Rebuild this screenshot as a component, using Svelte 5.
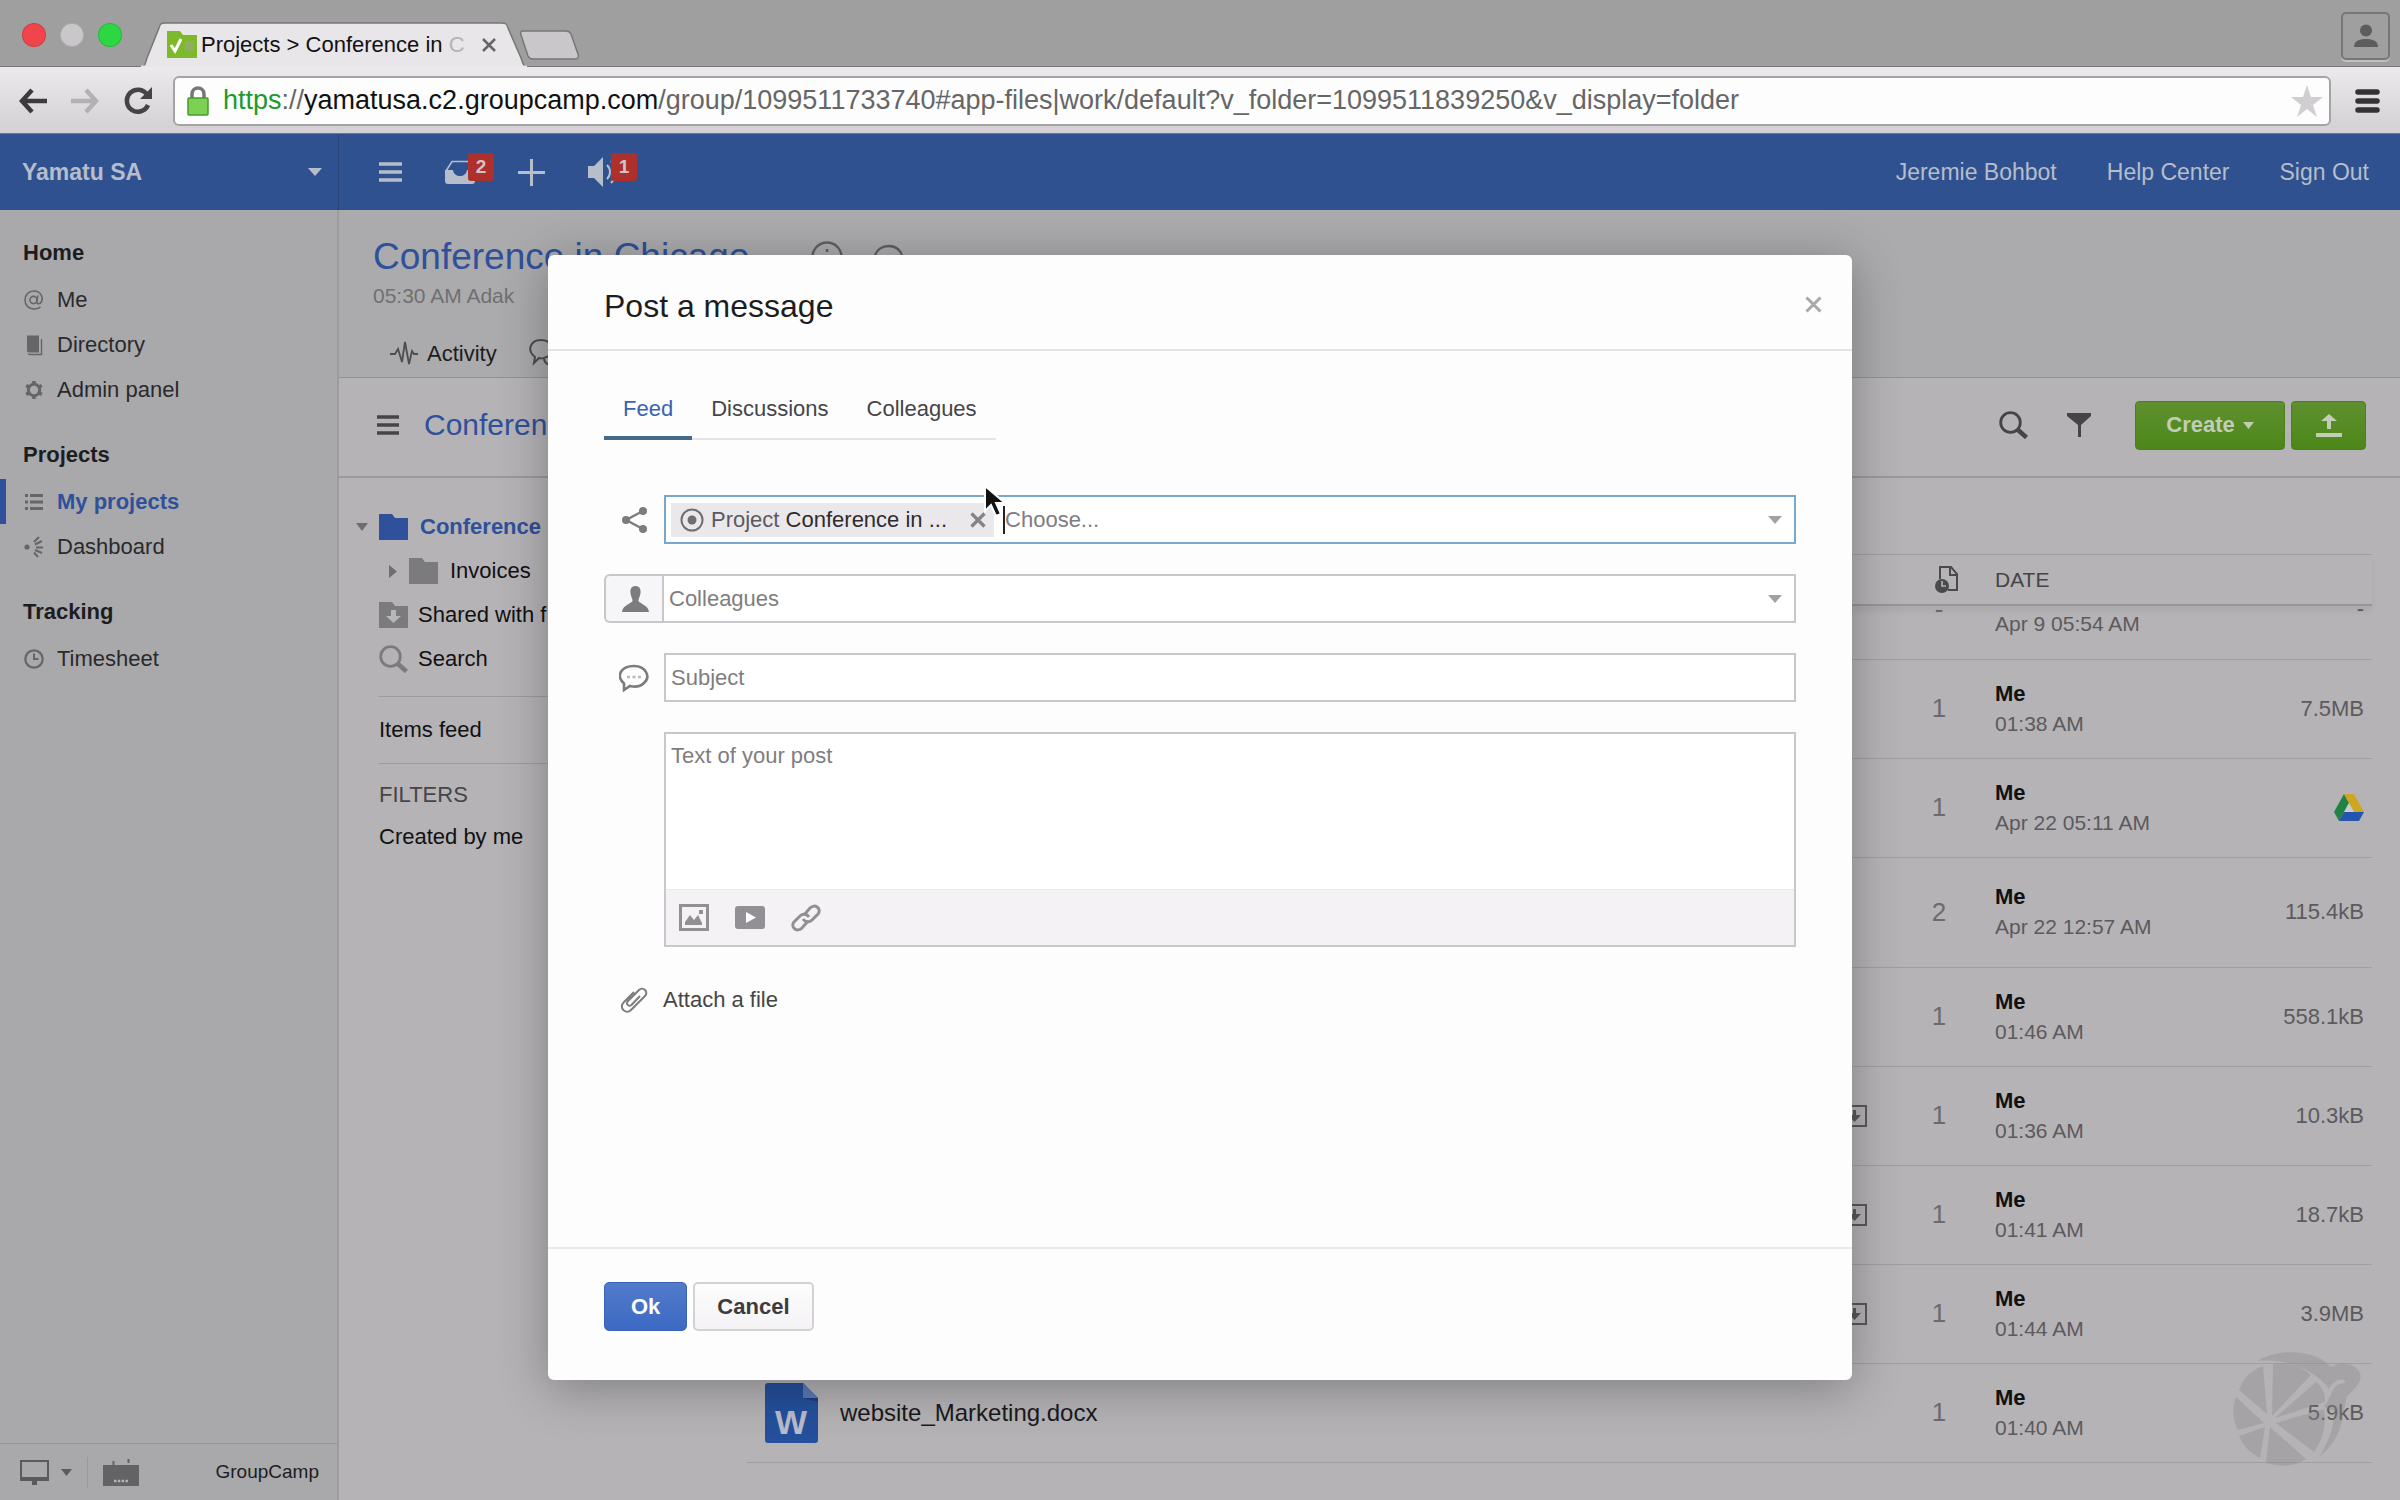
<script>
  const url_path = '/group/1099511733740#app-files|work/default?v_folder=1099511839250&v_display=folder';

  const sections = [
    { title: 'Home', items: [
      { label: 'Me', icon: 'at' },
      { label: 'Directory', icon: 'book' },
      { label: 'Admin panel', icon: 'gear' }
    ] },
    { title: 'Projects', items: [
      { label: 'My projects', icon: 'list', active: true },
      { label: 'Dashboard', icon: 'dashboard' }
    ] },
    { title: 'Tracking', items: [
      { label: 'Timesheet', icon: 'clock' }
    ] }
  ];

  const files = [
    { versions: '-', who: '', date: 'Apr 9 05:54 AM', size: '-' },
    { versions: '1', who: 'Me', date: '01:38 AM', size: '7.5MB' },
    { versions: '1', who: 'Me', date: 'Apr 22 05:11 AM', drive: true },
    { versions: '2', who: 'Me', date: 'Apr 22 12:57 AM', size: '115.4kB', tall: true },
    { versions: '1', who: 'Me', date: '01:46 AM', size: '558.1kB' },
    { versions: '1', who: 'Me', date: '01:36 AM', size: '10.3kB', download: true },
    { versions: '1', who: 'Me', date: '01:41 AM', size: '18.7kB', download: true },
    { versions: '1', who: 'Me', date: '01:44 AM', size: '3.9MB', download: true },
    { name: 'website_Marketing.docx', versions: '1', who: 'Me', date: '01:40 AM', size: '5.9kB' }
  ];

  const tabs = ['Feed', 'Discussions', 'Colleagues'];
  let tab = $state('Feed');
  let open = $state(true);
  let choose = $state('');
  let subject = $state('');
  let text = $state('');
</script>

{#snippet arrow()}
  <svg class="arrow" width="14" height="8" viewBox="0 0 14 8"><path d="M0 0h14L7 8z" fill="currentColor" /></svg>
{/snippet}

{#snippet bars(w)}
  <svg width={w} height="20" viewBox="0 0 24 20" preserveAspectRatio="none"><path d="M0 2h24M0 10h24M0 18h24" stroke="currentColor" stroke-width="3.600" /></svg>
{/snippet}

{#snippet folder()}
  <svg width="29" height="26" viewBox="0 0 29 26"><path d="M0 0h13l3 4h13v22H0z" fill="currentColor" /></svg>
{/snippet}

{#snippet magnifier()}
  <svg width="29" height="28" viewBox="0 0 29 28" fill="none" stroke="currentColor"><circle cx="11.500" cy="11.500" r="9.800" stroke-width="2.800" /><path d="M18.500 18.500l9 8" stroke-width="4.500" /></svg>
{/snippet}

{#snippet nav_icon(name)}
  <svg width="20" height="22" viewBox="0 0 20 22" fill="none" stroke="currentColor">
    {#if name == 'at'}
      <circle cx="9.500" cy="11" r="3.600" stroke-width="1.600" />
      <path d="M13.800 6.500l-1 6.500c0 2.500 3.200 2.200 4.500 0 2.500-5-1-11-7.500-11C4.500 2 1 6 1 11s3.500 9 9 9c2.800 0 5-.8 6.500-2.200" stroke-width="1.600" />
    {:else if name == 'book'}
      <path d="M3 1.500h12v17H5c-1.500 0-2-.8-2-2z" fill="currentColor" stroke="none" />
      <path d="M4 19.500c.5.800 1.200 1 2 1h11.500V5" stroke-width="1.400" />
    {:else if name == 'gear'}
      <circle cx="10" cy="11" r="5.700" stroke-width="3" />
      <path d="M10 2v4M10 16v4M2.200 6.500l3.400 2M14.400 13.500l3.400 2M2.200 15.500l3.400-2M14.400 8.500l3.400-2" stroke-width="3.600" />
    {:else if name == 'list'}
      <path d="M1 4.500h3M1 11h3M1 17.500h3M6 4.500h13M6 11h13M6 17.500h13" stroke-width="3" />
    {:else if name == 'dashboard'}
      <circle cx="3" cy="11" r="2.600" fill="currentColor" stroke="none" />
      <path d="M10 6l5-5M11 8.500L18 5M12 11.500h7M11 14l7 3M10 16.500l4 4.500" stroke-width="2" />
    {:else if name == 'clock'}
      <circle cx="10" cy="11" r="8.700" stroke-width="2.200" />
      <path d="M10 5.500V11h4.500" stroke-width="2" />
    {/if}
  </svg>
{/snippet}

<div class="window">
  <div class="tabstrip">
    <div class="lights"><i class="red"></i><i class="grey"></i><i class="green"></i></div>
    <div class="tab">
      <svg class="tab-shape" viewBox="0 0 388 45" preserveAspectRatio="none">
        <path d="M0 45c6 0 5-4 7-9L19 6c1-4 2-5 6-5h336c5 0 6 1 7 5l13 30c2 5 2 9 7 9z" fill="#e8e6e8" stroke="#777" stroke-width="1.500" />
        <path d="M1 45h386" stroke="#e8e6e8" stroke-width="3" />
      </svg>
      <svg width="30" height="27" viewBox="0 0 30 27"><path d="M0 0h13l3 4h14v23H0z" fill="#7db92b" /><path d="M18 10h9v10h-9z" fill="#8fae62" /><path d="M4 14l4 6 6-12" fill="none" stroke="#fff" stroke-width="3" /></svg>
      <span class="tab-title">Projects &gt; Conference in <em>C</em></span>
      <button class="plain" aria-label="Close tab"><svg width="14" height="14" viewBox="0 0 14 14"><path d="M1 1l12 12M13 1L1 13" stroke="#666" stroke-width="2.500" /></svg></button>
    </div>
    <svg class="newtab" width="60" height="30" viewBox="0 0 60 30"><path d="M3 1h43c3 0 4 1 5 3l7 20c1 3 0 5-3 5H13c-3 0-4-1-5-3L1 5c-1-3 0-4 2-4z" fill="#c9c7c9" stroke="#777" stroke-width="1.500" /></svg>
    <div class="avatar"><svg width="24" height="25" viewBox="0 0 24 25" fill="#5d5d5d"><circle cx="12" cy="6.500" r="6" /><path d="M0 23c0-6 5-8 12-8s12 2 12 8z" /></svg></div>
  </div>

  <div class="toolbar">
    <button class="plain" aria-label="Back"><svg width="28" height="26" viewBox="0 0 28 26" fill="none" stroke="#3c3a3c" stroke-width="4.500"><path d="M13 2L3 13l10 11M3 13h25" /></svg></button>
    <button class="plain" aria-label="Forward"><svg width="28" height="26" viewBox="0 0 28 26" fill="none" stroke="#b3b1b3" stroke-width="4.500"><path d="M15 2l10 11-10 11M25 13H0" /></svg></button>
    <button class="plain" aria-label="Reload"><svg width="30" height="29" viewBox="0 0 30 29"><path d="M24 8.500A11 11 0 1 0 25 19" fill="none" stroke="#454345" stroke-width="4.500" /><path d="M29 1v12H17z" fill="#454345" /></svg></button>
    <div class="address">
      <svg width="22" height="30" viewBox="0 0 22 30"><path d="M5 14V8c0-8 12-8 12 0v6" fill="none" stroke="#777" stroke-width="3.500" /><rect x="1" y="12" width="20" height="17" rx="1" fill="#7cd155" stroke="#489a2a" stroke-width="1.500" /></svg>
      <span class="url"><span class="secure">https</span><span class="dim">://</span>yamatusa.c2.groupcamp.com<span class="dim">{url_path}</span></span>
      <svg width="32" height="32" viewBox="0 0 32 32"><path d="M16 0l4 12h12l-10 8 4 12-10-8-10 8 4-12L0 12h12z" fill="#d0ced0" /></svg>
    </div>
    <button class="plain" aria-label="Menu"><svg width="25" height="26" viewBox="0 0 25 26" stroke="#333" stroke-width="5.500" stroke-linecap="round"><path d="M3 4h19M3 13h19M3 22h19" /></svg></button>
  </div>

  <div class="app">
    <header class="topbar">
      <button class="plain account">Yamatu SA {@render arrow()}</button>
      <div class="tools">
        <button class="plain" aria-label="Toggle menu">{@render bars(23)}</button>
        <button class="plain" aria-label="Inbox">
          <svg width="30" height="24" viewBox="0 0 30 24"><path d="M1 11L7 1.500h16L29 11" fill="none" stroke="currentColor" stroke-width="1.600" /><path d="M0 10h8c1 8 13 8 14 0h8v11c0 2-1 3-3 3H3c-2 0-3-1-3-3z" fill="currentColor" /></svg>
          <b class="badge">2</b>
        </button>
        <button class="plain" aria-label="Add"><svg width="27" height="27" viewBox="0 0 27 27"><path d="M13.500 0v27M0 13.500h27" stroke="currentColor" stroke-width="3" /></svg></button>
        <button class="plain tool-sound" aria-label="Announcements">
          <svg width="30" height="30" viewBox="0 0 30 30"><path d="M0 9h6l9-9v30l-9-9H0z" fill="currentColor" /><path d="M19 8c4 4 4 10 0 14M23 4c6 6 6 16 0 22" fill="none" stroke="currentColor" stroke-width="2" /></svg>
          <b class="badge">1</b>
        </button>
      </div>
      <nav class="user-links">
        <a href="#profile">Jeremie Bohbot</a>
        <a href="#help">Help Center</a>
        <a href="#signout">Sign Out</a>
      </nav>
    </header>

    <div class="body">
      <aside class="sidebar">
        <nav>
          {#each sections as section}
            <section>
              <h2>{section.title}</h2>
              {#each section.items as item}
                <a href="#nav" class:active={item.active}>{@render nav_icon(item.icon)}{item.label}</a>
              {/each}
            </section>
          {/each}
        </nav>
        <footer>
          <svg width="29" height="25" viewBox="0 0 29 25"><path d="M1 1h27v19H1z" fill="none" stroke="#5b5b5d" stroke-width="2" /><path d="M0 17h29v4H0zM12 21h5v4h-5z" fill="#5b5b5d" /></svg>
          <svg width="11" height="7" viewBox="0 0 11 7"><path d="M0 0h11L5.500 7z" fill="#5b5b5d" /></svg>
          <i class="rule"></i>
          <svg width="36" height="27" viewBox="0 0 36 27"><path d="M0 6h36v21H0z" fill="#636365" /><path d="M10.500 2v4M25.500 0v4" stroke="#636365" stroke-width="2" /><path d="M11 22h14" stroke="#b5b5b7" stroke-width="2.500" stroke-dasharray="2.500 1.300" /></svg>
          <span>GroupCamp</span>
        </footer>
      </aside>

      <main>
        <div class="project">
          <h1><span>Conference in Chicago</span>
            <svg width="32" height="32" viewBox="0 0 32 32" fill="none" stroke="#5f5f61" stroke-width="2.400"><circle cx="16" cy="16" r="14.500" /><path d="M16 8v3M16 14v10" /></svg>
            <svg width="32" height="32" viewBox="0 0 32 32" fill="none" stroke="#5f5f61" stroke-width="2.400"><path d="M8 29c-12-9-6-24 8-24s20 19 4 23l-8 1-5 2z" /></svg>
          </h1>
          <p>05:30 AM Adak</p>
          <div class="project-tabs">
            <a href="#activity"><svg width="28" height="26" viewBox="0 0 28 26" fill="none" stroke="#4d4d4f" stroke-width="1.800"><path d="M0 13h5l3-5 4 13L15 1l4 22 3-13 2 3h4" /></svg>Activity</a>
            <a href="#talk" aria-label="Discussions"><svg width="34" height="32" viewBox="0 0 34 32" fill="none" stroke="#4d4d4f" stroke-width="2"><path d="M5 25l1-6C-3 12 2 2 12 2s15 10 9 15-11 3-11 3zM15 21c1 6 8 7 11 5l5 3-1-5c4-5 1-10-4-11" /></svg></a>
          </div>
        </div>

        <div class="folder-bar">
          {@render bars(22)}
          <h2>Conference in Chicago</h2>
          <div class="actions">
            <button class="plain" aria-label="Search">{@render magnifier()}</button>
            <button class="plain" aria-label="Filter"><svg width="24" height="24" viewBox="0 0 24 24"><path d="M0 0h24v3l-10 9v12h-3V12L0 3z" fill="currentColor" /></svg></button>
            <div class="create">
              <button>Create <svg width="11" height="7" viewBox="0 0 11 7"><path d="M0 0h11L5.500 7z" fill="currentColor" /></svg></button>
              <button aria-label="Upload"><svg width="26" height="23" viewBox="0 0 26 23"><path d="M13 0l8 7h-6v8h-4V7H5zM0 19h26v4H0z" fill="currentColor" /></svg></button>
            </div>
          </div>
        </div>

        <div class="content">
          <div class="tree">
            <a href="#folder" class="row current"><span class="toggle"><svg width="12" height="8" viewBox="0 0 12 8"><path d="M0 0h12L6 8z" fill="#6e6e70" /></svg></span>{@render folder()}<span>Conference</span></a>
            <a href="#folder" class="row child"><span class="toggle"><svg width="8" height="13" viewBox="0 0 8 13"><path d="M0 0l8 6.500L0 13z" fill="#6e6e70" /></svg></span>{@render folder()}<span>Invoices</span></a>
            <a href="#folder" class="row tight"><svg width="29" height="26" viewBox="0 0 29 26"><path d="M0 0h13l3 4h13v22H0z" fill="currentColor" /><path d="M12 8h5v6h5l-7.500 7L7 14h5z" fill="#b9b7ba" /></svg><span>Shared with f</span></a>
            <a href="#folder" class="row tight">{@render magnifier()}<span>Search</span></a>
            <a href="#feed" class="feed">Items feed</a>
            <h3>FILTERS</h3>
            <a href="#mine" class="filter">Created by me</a>
          </div>

          <div class="files">
            <div class="files-head">
              <svg width="24" height="27" viewBox="0 0 24 27"><path d="M5 13V1h11l6 7v16h-9M15 1v8h7" fill="none" stroke="#4a4a4c" stroke-width="2" /><circle cx="7" cy="20" r="7" fill="#4a4a4c" /><path d="M7 15v5h4" fill="none" stroke="#b5b3b6" stroke-width="1.600" /></svg>
              <span>DATE</span>
            </div>
            <div class="scroller">
              <table>
                <tbody>
                  {#each files as file}
                    <tr class:tall={file.tall}>
                      <td>
                        {#if file.name}
                          <a class="file" href="#file">
                            <svg width="53" height="60" viewBox="0 0 53 60"><path d="M3 0h35l15 15v42c0 2-1 3-3 3H3c-2 0-3-1-3-3V3c0-2 1-3 3-3z" fill="#24509c" /><path d="M38 15h15v4z" fill="#1c3f7e" /><path d="M38 0l15 15H38z" fill="#5a7bb5" /><text x="26" y="51" text-anchor="middle" font-size="34" font-weight="bold" fill="#b9bccb">W</text></svg>
                            {file.name}
                          </a>
                        {/if}
                      </td>
                      <td class="get">
                        {#if file.download}
                          <svg width="26" height="22" viewBox="0 0 26 22"><path d="M1 1h24v20H1z" fill="none" stroke="#59595b" stroke-width="2" /><path d="M12 5h3v5h5l-6.500 7L7 10h5z" fill="#59595b" /></svg>
                        {/if}
                      </td>
                      <td class="versions">{file.versions}</td>
                      <td class="date"><b>{file.who}</b><span>{file.date}</span></td>
                      <td class="size">
                        {#if file.drive}
                          <svg width="30" height="27" viewBox="0 0 30 27"><path d="M10 0L0 18l5 9L15 9z" fill="#218343" /><path d="M10 0h10l10 18H20z" fill="#cfa621" /><path d="M10 18h20l-5 9H5z" fill="#2754ad" /><path d="M15 9l5 9H10z" fill="#c9cbd2" /></svg>
                        {:else}
                          {file.size}
                        {/if}
                      </td>
                    </tr>
                  {/each}
                </tbody>
              </table>
            </div>
          </div>
        </div>
      </main>
    </div>

    <svg class="mark" width="128" height="114" viewBox="0 0 128 114">
      <g fill="#88888a" fill-opacity=".35">
        <path d="M24 9C48-5 84-2 98 15c8-6 25-4 29 6 3 9-6 17-13 23-5 18-2 40-28 61 9-14 15-28 15-47-3 2-8-2-10-4 6-6 7-15 12-20 4-3 10-2 9-5-4-4-13 1-16 8-14-20-44-31-72-28z" />
        <path d="M40 12c14-2 29 2 38 11L39 64z" />
        <path d="M30 14l4 48L6 38C10 26 18 18 30 14z" />
        <path d="M3 45l28 26-26 7C-1 67-1 56 3 45z" />
        <path d="M6 84l26-9-5 31C17 101 10 94 6 84z" />
        <path d="M37 75l36 32c-12 8-26 8-40 4z" />
        <path d="M43 71l48-14c3 16-2 32-10 43z" />
        <path d="M42 66l41-36c6 5 9 11 9 20z" />
      </g>
    </svg>

    {#if open}
      <div class="overlay">
        <div class="modal" role="dialog" aria-labelledby="modal-title">
          <div class="modal-head">
            <h2 id="modal-title">Post a message</h2>
            <button class="plain" aria-label="Close" onclick={() => open = false}><svg width="17" height="17" viewBox="0 0 17 17"><path d="M1.500 1.500l14 14M15.500 1.500l-14 14" stroke="#a9a7a9" stroke-width="3" /></svg></button>
          </div>

          <div class="modal-body">
            <div class="modal-tabs" role="tablist">
              {#each tabs as t}
                <button role="tab" aria-selected={tab == t} class:selected={tab == t} onclick={() => tab = t}>{t}</button>
              {/each}
            </div>

            <div class="form">
              <label class="lead" for="share"><svg width="25" height="26" viewBox="0 0 25 26"><path d="M21 4L4 13l17 9" fill="none" stroke="#7c7c7e" stroke-width="2.400" /><g fill="#7c7c7e"><circle cx="21" cy="4" r="4" /><circle cx="4" cy="13" r="4" /><circle cx="21" cy="22" r="4" /></g></svg></label>
              <div class="box focused">
                <span class="chip">
                  <svg width="24" height="24" viewBox="0 0 24 24"><circle cx="12" cy="12" r="10.500" fill="none" stroke="#6f6f71" stroke-width="2" /><circle cx="12" cy="12" r="4.500" fill="#6f6f71" /></svg>
                  <span>Project <b>Conference in ...</b></span>
                  <button class="plain" aria-label="Remove"><svg width="16" height="16" viewBox="0 0 16 16"><path d="M1.500 1.500l13 13M14.500 1.500l-13 13" stroke="#858385" stroke-width="3.200" /></svg></button>
                </span>
                <i class="text-caret"></i>
                <input id="share" type="text" placeholder="Choose..." bind:value={choose} />
                {@render arrow()}
                <svg class="pointer" width="24" height="34" viewBox="0 0 24 34"><path d="M2 2v25l6-6 5 11 5-2-5-11h9z" fill="#111" stroke="#fff" stroke-width="2" /></svg>
              </div>

              <button class="lead pick" aria-label="Pick colleagues"><svg width="27" height="26" viewBox="0 0 27 26"><path d="M13.500 0c4 0 5.500 3 5 7s-2 5-2 8c0 2 10 4 10.500 11H0c.5-7 10.500-9 10.500-11 0-3-1.500-4-2-8s1-7 5-7z" fill="#7c7c7e" /></svg></button>
              <div class="box joined">
                <select aria-label="Colleagues"><option>Colleagues</option></select>
                {@render arrow()}
              </div>

              <label class="lead" for="subject"><svg width="30" height="28" viewBox="0 0 30 28"><path d="M5 26V19.500C-4 11 3 2 15 2s17 11 10 17c-4 4-10 4-14 3z" fill="none" stroke="#7c7c7e" stroke-width="2.600" /><path d="M8 13h3M13.500 13h3M19 13h3" stroke="#bdbbbd" stroke-width="2.600" /></svg></label>
              <div class="box"><input id="subject" type="text" placeholder="Subject" bind:value={subject} /></div>

              <div class="editor">
                <textarea aria-label="Text of your post" placeholder="Text of your post" bind:value={text}></textarea>
                <div class="editor-tools">
                  <button class="plain" aria-label="Insert image"><svg width="30" height="27" viewBox="0 0 30 27"><path d="M1.500 1.500h27v24h-27z" fill="none" stroke="#929094" stroke-width="3" /><path d="M6 21v-3l5-7 4 5 4-5 4 8v2z" fill="#929094" /><path d="M20 6h4v4h-4z" fill="#929094" /></svg></button>
                  <button class="plain" aria-label="Insert video"><svg width="30" height="23" viewBox="0 0 30 23"><rect width="30" height="23" rx="3" fill="#929094" /><path d="M11 6l10 5.500L11 17z" fill="#fff" /></svg></button>
                  <button class="plain" aria-label="Insert link"><svg width="30" height="30" viewBox="0 0 30 30" fill="none" stroke="#929094" stroke-width="3"><path d="M13 12l6-7c5-5 12 1 8 6l-6 6c-3 3-7 2-9-1" /><path d="M17 18l-6 7c-5 5-12-1-8-6l6-6c3-3 7-2 9 1" /></svg></button>
                </div>
              </div>

              <label class="attach" for="attachment">
                <svg width="28" height="26" viewBox="0 0 28 26" fill="none" stroke="#7c7c7e" stroke-width="2"><path d="M14 5L4 15c-6 6 2 13 7 8L25 9c4-4-2-10-6-6L8 14c-3 3 1 6 3.500 4L20 9" /></svg>
                Attach a file
              </label>
              <input id="attachment" class="hidden" type="file" />
            </div>
          </div>

          <div class="modal-foot">
            <button class="primary" onclick={() => open = false}>Ok</button>
            <button onclick={() => open = false}>Cancel</button>
          </div>
        </div>
      </div>
    {/if}
  </div>
</div>

<style>
  :global(body) {
    background: #b5b3b6;
  }
  .window, button, input, select, textarea {
    font-family: "Liberation Sans", Arial, sans-serif;
    font-size: 22px;
  }
  .window {
    display: flex;
    flex-direction: column;
    height: 100vh;
    min-height: 1400px;
    color: #1d1d1f;
  }
  .window * {
    box-sizing: border-box;
  }
  .window svg {
    display: block;
    flex: none;
  }
  a {
    color: inherit;
    text-decoration: none;
  }
  h1, h2, h3, p {
    margin: 0;
  }
  .plain {
    border: 0;
    padding: 0;
    background: none;
    color: inherit;
    cursor: pointer;
  }

  /* browser chrome */
  .tabstrip {
    display: flex;
    align-items: flex-end;
    height: 67px;
    flex: none;
    padding: 0 10px 0 22px;
    background: #9f9f9f;
    border-bottom: 1px solid #777;
  }
  .lights {
    display: flex;
    gap: 14px;
    width: 118px;
    padding-bottom: 19px;
  }
  .lights i {
    width: 24px;
    height: 24px;
    border-radius: 50%;
    border: 1px solid #0002;
  }
  .red { background: #f2444c; }
  .grey { background: #c9c7c9; }
  .green { background: #2bd743; }
  .tab {
    position: relative;
    display: flex;
    align-items: center;
    width: 388px;
    height: 45px;
    margin-bottom: -1px;
    padding: 0 32px 0 27px;
    gap: 4px;
  }
  .tab > * {
    position: relative;
  }
  .tab .tab-shape {
    position: absolute;
    inset: 0;
    width: 100%;
    height: 100%;
  }
  .tab-title {
    flex: 1;
    white-space: nowrap;
    color: #111;
  }
  .tab-title em {
    font-style: normal;
    color: #b5b3b5;
  }
  .newtab {
    margin: 0 0 6px -8px;
  }
  .avatar {
    display: grid;
    place-items: center;
    width: 49px;
    height: 48px;
    margin: 0 0 6px auto;
    border: 2px solid #777;
    border-radius: 5px;
    box-shadow: 0 2px 0 #c0c0c0;
  }
  .toolbar {
    display: flex;
    align-items: center;
    gap: 24px;
    height: 67px;
    flex: none;
    padding: 1px 20px 0 19px;
    background: linear-gradient(#eceaec, #d2d0d2);
    border-bottom: 1px solid #777;
  }
  .address {
    flex: 1;
    display: flex;
    align-items: center;
    gap: 14px;
    height: 50px;
    padding: 0 6px 0 12px;
    margin-left: -4px;
    background: #fdfdfd;
    border: 2px solid #a5a3a5;
    border-radius: 6px;
    font-size: 27px;
  }
  .url {
    flex: 1;
    white-space: nowrap;
    color: #111;
  }
  .secure { color: #1d9a2c; }
  .dim { color: #666; }

  /* application */
  .app {
    position: relative;
    flex: 1;
    display: flex;
    flex-direction: column;
    min-height: 0;
  }
  .topbar {
    display: flex;
    align-items: center;
    height: 76px;
    flex: none;
    background: #30518f;
    color: #b6bdcb;
    font-size: 23px;
  }
  .account {
    display: flex;
    align-items: center;
    justify-content: space-between;
    width: 339px;
    height: 100%;
    padding: 0 16px 0 22px;
    border-right: 1px solid #2a467d;
    font-size: 23px;
    font-weight: bold;
  }
  .tools {
    display: flex;
    align-items: center;
    gap: 43px;
    padding-left: 40px;
  }
  .tools button {
    position: relative;
  }
  .badge {
    position: absolute;
    top: -7px;
    left: 23px;
    width: 26px;
    line-height: 28px;
    border-radius: 3px;
    background: #ad302d;
    color: #d3c3c6;
    font-size: 19px;
  }
  .tool-sound .badge {
    top: -4px;
  }
  .user-links {
    display: flex;
    gap: 50px;
    margin-left: auto;
    padding-right: 31px;
  }
  .body {
    flex: 1;
    display: flex;
    min-height: 0;
  }

  .sidebar {
    display: flex;
    flex-direction: column;
    width: 339px;
    flex: none;
    background: #a9a9ab;
    border-right: 2px solid #9c9c9e;
  }
  .sidebar nav {
    flex: 1;
    display: flex;
    flex-direction: column;
    gap: 19px;
    padding-top: 19px;
  }
  .sidebar h2 {
    padding-left: 23px;
    font-size: 22px;
    line-height: 48px;
  }
  .sidebar nav a {
    display: flex;
    align-items: center;
    gap: 13px;
    height: 45px;
    padding-left: 18px;
    border-left: 6px solid transparent;
    color: #2a2a2c;
  }
  .sidebar nav svg {
    color: #666668;
  }
  .sidebar nav .active {
    border-color: #2f509a;
    color: #2f509a;
    font-weight: bold;
  }
  .sidebar footer {
    display: flex;
    align-items: center;
    height: 57px;
    padding: 0 18px 0 20px;
    gap: 12px;
    border-top: 1px solid #969698;
    font-size: 19px;
  }
  .rule {
    width: 1px;
    height: 31px;
    margin: 0 3px;
    background: #9a9a9c;
  }
  .sidebar footer span {
    margin-left: auto;
  }

  main {
    flex: 1;
    display: flex;
    flex-direction: column;
    min-width: 0;
    background: #b5b3b6;
  }
  .project {
    padding: 24px 34px 0;
    background: #ababad;
    border-bottom: 1px solid #939395;
  }
  .project h1 {
    display: flex;
    align-items: center;
    gap: 30px;
    font-size: 37px;
    font-weight: normal;
    line-height: 46px;
    color: #2f509a;
  }
  .project h1 span {
    margin-right: 32px;
  }
  .project p {
    font-size: 21px;
    line-height: 32px;
    color: #707072;
  }
  .project-tabs {
    display: flex;
    gap: 32px;
    height: 65px;
    padding: 18px 0 0 17px;
  }
  .project-tabs a {
    display: flex;
    align-items: center;
    gap: 9px;
  }
  .folder-bar {
    display: flex;
    align-items: center;
    height: 100px;
    flex: none;
    padding: 4px 34px 8px 38px;
    gap: 25px;
    color: #454547;
    border-bottom: 2px solid #9b999c;
  }
  .folder-bar h2 {
    font-size: 30px;
    font-weight: normal;
    color: #2f509a;
  }
  .actions {
    display: flex;
    align-items: center;
    gap: 39px;
    margin-left: auto;
  }
  .create {
    display: flex;
    gap: 6px;
    margin-left: 5px;
  }
  .create button {
    display: flex;
    align-items: center;
    justify-content: center;
    gap: 8px;
    width: 150px;
    height: 49px;
    border: 1px solid #4c8019;
    border-radius: 4px;
    background: linear-gradient(#5f9030, #4c8718);
    color: #c2cdb8;
    font-weight: bold;
  }
  .create button:last-child {
    width: 75px;
  }

  .content {
    flex: 1;
    display: flex;
    min-height: 0;
  }
  .tree {
    width: 408px;
    flex: none;
    padding: 27px 40px 0;
    color: #111;
  }
  .row {
    display: flex;
    align-items: center;
    gap: 12px;
    height: 44px;
    white-space: nowrap;
  }
  .row svg {
    color: #7b7b7d;
  }
  .row .toggle {
    width: 23px;
    margin: 0 -12px 0 -23px;
  }
  .row.child {
    padding-left: 30px;
  }
  .row.child .toggle {
    width: 20px;
    margin-left: -20px;
  }
  .row.tight {
    gap: 10px;
  }
  .row.current, .row.current > svg {
    color: #2f509a;
    font-weight: bold;
  }
  .feed {
    display: block;
    margin: 15px 0 10px;
    line-height: 66px;
    border-top: 1px solid #9d9b9e;
    border-bottom: 1px solid #9d9b9e;
  }
  .tree h3 {
    font-size: 22px;
    font-weight: normal;
    line-height: 42px;
    color: #454547;
  }
  .filter {
    line-height: 42px;
  }

  .files {
    flex: 1;
    display: flex;
    flex-direction: column;
    min-width: 0;
    padding: 76px 28px 0 0;
  }
  .files-head {
    position: relative;
    display: flex;
    align-items: center;
    justify-content: flex-end;
    gap: 36px;
    height: 52px;
    flex: none;
    border-top: 1px solid #a09ea1;
    border-bottom: 2px solid #979598;
    box-shadow: 0 6px 6px #0000000c;
    font-size: 21px;
    color: #454547;
  }
  .files-head span {
    width: 377px;
  }
  .scroller {
    flex: 1;
    overflow: hidden;
  }
  /* the list is scrolled part of a row down */
  table {
    width: 100%;
    margin-top: -46px;
    table-layout: fixed;
    border-collapse: collapse;
  }
  td {
    height: 99px;
    padding: 0;
    border-bottom: 1px solid #a09ea1;
    color: #5c5a5d;
  }
  .tall td {
    height: 110px;
  }
  .file {
    display: flex;
    align-items: center;
    gap: 22px;
    padding-left: 18px;
    font-size: 24px;
    color: #1a1a1c;
  }
  .get {
    width: 58px;
    padding-left: 16px;
  }
  .versions {
    width: 112px;
    text-align: center;
    font-size: 26px;
    color: #6c6a6d;
  }
  .date {
    width: 220px;
    font-size: 21px;
    line-height: 30px;
  }
  .date b {
    display: block;
    min-height: 30px;
    font-size: 22px;
    color: #111;
  }
  .size {
    width: 157px;
    padding-right: 8px;
    text-align: right;
  }
  .size svg {
    margin-left: auto;
  }
  .mark {
    position: absolute;
    right: 39px;
    bottom: 34px;
  }

  /* dialog */
  .overlay {
    position: absolute;
    inset: 0;
    display: flex;
    justify-content: center;
    align-items: flex-start;
    padding-top: 121px;
  }
  .modal {
    width: 90%;
    max-width: 1304px;
    background: #fdfdfd;
    border-radius: 6px;
    box-shadow: 0 8px 50px #0000004d;
  }
  .modal-head {
    display: flex;
    align-items: center;
    justify-content: space-between;
    height: 96px;
    padding: 4px 30px 0 56px;
    border-bottom: 2px solid #e5e3e5;
  }
  .modal-head h2 {
    padding-top: 4px;
    font-size: 32px;
    font-weight: normal;
  }
  .modal-body {
    min-height: 896px;
    padding: 30px 56px;
  }
  .modal-tabs {
    display: inline-flex;
    margin-bottom: 55px;
  }
  .modal-tabs button {
    height: 59px;
    padding: 0 19px 2px;
    border: 0;
    border-bottom: 2px solid #e5e3e5;
    background: none;
    color: #454547;
  }
  .modal-tabs .selected {
    padding-bottom: 0;
    border-bottom: 4px solid #446a8a;
    color: #3a63b5;
  }
  .form {
    display: grid;
    grid-template-columns: 60px 1fr;
    row-gap: 30px;
  }
  .lead {
    display: grid;
    place-items: center;
    height: 49px;
  }
  .pick {
    padding: 0;
    border: 2px solid #c9c7c9;
    border-right: 0;
    border-radius: 6px 0 0 6px;
    background: #f6f5f7;
  }
  .box {
    position: relative;
    display: flex;
    align-items: center;
    height: 49px;
    padding: 0 12px 0 5px;
    background: #fff;
    border: 2px solid #c9c7c9;
  }
  .box.focused {
    border-color: #79a8cc;
  }
  .box.joined {
    margin-left: -2px;
  }
  .box input, .box select {
    flex: 1;
    min-width: 0;
    height: 40px;
    padding: 0;
    border: 0;
    outline: 0;
    background: none;
    color: #7f7d80;
    appearance: none;
  }
  input::placeholder, textarea::placeholder {
    color: #7f7d80;
    opacity: 1;
  }
  .box .arrow {
    color: #a3a1a4;
  }
  .chip {
    display: flex;
    align-items: center;
    height: 34px;
    padding: 0 8px 0 9px;
    gap: 7px;
    background: #ebe8eb;
    color: #5c5a5d;
  }
  .chip b {
    font-weight: normal;
    color: #2e2c2f;
  }
  .chip button {
    margin-left: 16px;
  }
  .text-caret {
    width: 2px;
    height: 28px;
    margin-left: 9px;
    background: #222;
  }
  .pointer {
    position: absolute;
    left: 317px;
    top: -13px;
  }
  .editor {
    grid-column: 2;
    border: 2px solid #c9c7c9;
    background: #fff;
  }
  textarea {
    display: block;
    width: 100%;
    height: 155px;
    padding: 9px 5px;
    border: 0;
    outline: 0;
    resize: none;
    background: none;
  }
  .editor-tools {
    display: flex;
    align-items: center;
    gap: 26px;
    height: 56px;
    padding-left: 13px;
    border-top: 1px solid #ebe9ec;
    background: #f4f2f5;
  }
  .attach {
    grid-column: 1 / -1;
    display: flex;
    align-items: center;
    gap: 15px;
    height: 46px;
    padding-left: 16px;
    color: #454547;
  }
  .hidden {
    display: none;
  }
  .modal-foot {
    display: flex;
    gap: 6px;
    padding: 33px 56px 49px;
    border-top: 2px solid #e8e6e8;
  }
  .modal-foot button {
    height: 49px;
    padding: 0 22px;
    border: 2px solid #d3d1d3;
    border-radius: 5px;
    background: linear-gradient(#fdfdfd, #f4f2f5);
    color: #3d3b3e;
    font-weight: bold;
  }
  .modal-foot .primary {
    padding: 0 26px;
    border: 1px solid #3b64b8;
    background: linear-gradient(#517bcb, #3c69c3);
    color: #fff;
  }
</style>
